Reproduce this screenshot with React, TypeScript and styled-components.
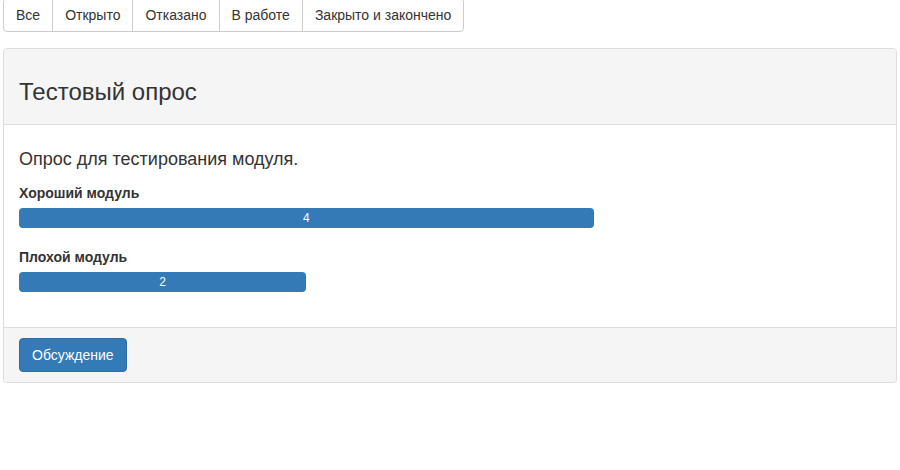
import React from "react";
import styled, { createGlobalStyle } from "styled-components";

const Global = createGlobalStyle`
  * { box-sizing: border-box; }
  html, body { margin: 0; padding: 0; background: #fff; }
  body {
    font-family: "Liberation Sans", Arial, sans-serif;
    font-size: 14px;
    line-height: 1.42857143;
    color: #333;
  }
`;

const Page = styled.div`
  padding: 0 3px;
`;

const BtnGroup = styled.div`
  display: inline-flex;
  margin-top: -2px;
`;

const GroupBtn = styled.button`
  font-family: inherit;
  font-size: 14px;
  line-height: 20px;
  color: #333;
  background: #fff;
  border: 1px solid #ccc;
  padding: 6px 12px;
  margin-left: -1px;
  height: 34px;
  cursor: pointer;
  &:first-child {
    margin-left: 0;
    border-radius: 4px 0 0 4px;
  }
  &:last-child {
    border-radius: 0 4px 4px 0;
  }
`;

const Panel = styled.div`
  margin-top: 16px;
  border: 1px solid #ddd;
  border-radius: 4px;
  background: #fff;
  box-shadow: 0 1px 1px rgba(0, 0, 0, 0.05);
`;

const PanelHeading = styled.div`
  background: #f5f5f5;
  border-bottom: 1px solid #ddd;
  border-radius: 3px 3px 0 0;
  padding: 10px 15px;
`;

const Title = styled.h3`
  margin: 20px 0 10px;
  font-size: 24px;
  font-weight: 500;
  line-height: 25px;
  color: #333;
`;

const PanelBody = styled.div`
  padding: 15px;
`;

const Lead = styled.h4`
  margin: 10px 0 14px;
  font-size: 18px;
  font-weight: 500;
  line-height: 1.1;
`;

const Label = styled.label`
  display: block;
  font-weight: 700;
  margin-bottom: 5px;
  line-height: 19px;
`;

const Progress = styled.div`
  height: 20px;
  margin-bottom: 20px;
  display: flex;
`;

const Bar = styled.div`
  height: 20px;
  background: #337ab7;
  border-radius: 4px;
  color: #fff;
  font-size: 12px;
  line-height: 20px;
  text-align: center;
`;

const PanelFooter = styled.div`
  background: #f5f5f5;
  border-top: 1px solid #ddd;
  border-radius: 0 0 3px 3px;
  padding: 10px 15px;
`;

const PrimaryBtn = styled.button`
  font-family: inherit;
  font-size: 14px;
  line-height: 20px;
  color: #fff;
  background: #337ab7;
  border: 1px solid #2e6da4;
  border-radius: 4px;
  padding: 6px 12px;
  height: 34px;
  cursor: pointer;
`;

const filters = ["Все", "Открыто", "Отказано", "В работе", "Закрыто и закончено"];

const results = [
  { name: "Хороший модуль", votes: 4 },
  { name: "Плохой модуль", votes: 2 },
];

const total = 6;

export default function App() {
  return (
    <Page>
      <Global />
      <BtnGroup>
        {filters.map((f) => (
          <GroupBtn key={f}>{f}</GroupBtn>
        ))}
      </BtnGroup>
      <Panel>
        <PanelHeading>
          <Title>Тестовый опрос</Title>
        </PanelHeading>
        <PanelBody>
          <Lead>Опрос для тестирования модуля.</Lead>
          {results.map((r) => (
            <div key={r.name}>
              <Label>{r.name}</Label>
              <Progress>
                <Bar style={{ width: `${(r.votes / total) * 100}%` }}>{r.votes}</Bar>
              </Progress>
            </div>
          ))}
        </PanelBody>
        <PanelFooter>
          <PrimaryBtn>Обсуждение</PrimaryBtn>
        </PanelFooter>
      </Panel>
    </Page>
  );
}
